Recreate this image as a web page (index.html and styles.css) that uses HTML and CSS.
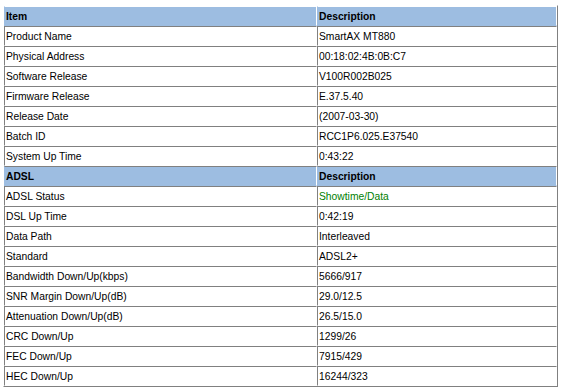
FILE: index.html
```html
<!DOCTYPE html>
<html>
<head>
<meta charset="utf-8">
<title>Device Info</title>
<link rel="stylesheet" href="styles.css">
</head>
<body>
<table class="info">
  <tr class="hdr first"><td class="c1">Item</td><td class="c2">Description</td></tr>
  <tr><td>Product Name</td><td>SmartAX MT880</td></tr>
  <tr><td>Physical Address</td><td>00:18:02:4B:0B:C7</td></tr>
  <tr><td>Software Release</td><td>V100R002B025</td></tr>
  <tr><td>Firmware Release</td><td>E.37.5.40</td></tr>
  <tr><td>Release Date</td><td>(2007-03-30)</td></tr>
  <tr><td>Batch ID</td><td>RCC1P6.025.E37540</td></tr>
  <tr><td>System Up Time</td><td>0:43:22</td></tr>
  <tr class="hdr"><td>ADSL</td><td>Description</td></tr>
  <tr><td>ADSL Status</td><td class="ok">Showtime/Data</td></tr>
  <tr><td>DSL Up Time</td><td>0:42:19</td></tr>
  <tr><td>Data Path</td><td>Interleaved</td></tr>
  <tr><td>Standard</td><td>ADSL2+</td></tr>
  <tr><td>Bandwidth Down/Up(kbps)</td><td>5666/917</td></tr>
  <tr><td>SNR Margin Down/Up(dB)</td><td>29.0/12.5</td></tr>
  <tr><td>Attenuation Down/Up(dB)</td><td>26.5/15.0</td></tr>
  <tr><td>CRC Down/Up</td><td>1299/26</td></tr>
  <tr><td>FEC Down/Up</td><td>7915/429</td></tr>
  <tr><td>HEC Down/Up</td><td>16244/323</td></tr>
</table>
</body>
</html>
```
FILE: styles.css
```css
html, body {
  margin: 0;
  padding: 0;
  background: #ffffff;
}

body {
  font-family: "Liberation Sans", Arial, sans-serif;
  font-size: 10.3px;
  color: #000000;
}

.info {
  margin: 5px 0 0 3px;
  width: 555px;
  border-collapse: separate;
  border-spacing: 0;
  border: 1px solid;
  border-color: #ffffff #808080 #808080 #ffffff;
  table-layout: fixed;
}

.info td {
  height: 17px;
  line-height: 17px;
  padding: 1px 0 0 1px;
  border: 1px solid;
  border-color: #808080 #ffffff #ffffff #808080;
  white-space: nowrap;
  overflow: hidden;
  vertical-align: middle;
}

.info .c1 {
  width: 310px;
}

.info .c2 {
  width: 237px;
}

.info .hdr td {
  background: #9dbde1;
  font-weight: bold;
  border-color: #808080 #ffffff #9dbde1 #9dbde1;
}

.info .hdr.first td {
  border-top-color: #ffffff;
}

.info .ok {
  color: #008000;
}
```
